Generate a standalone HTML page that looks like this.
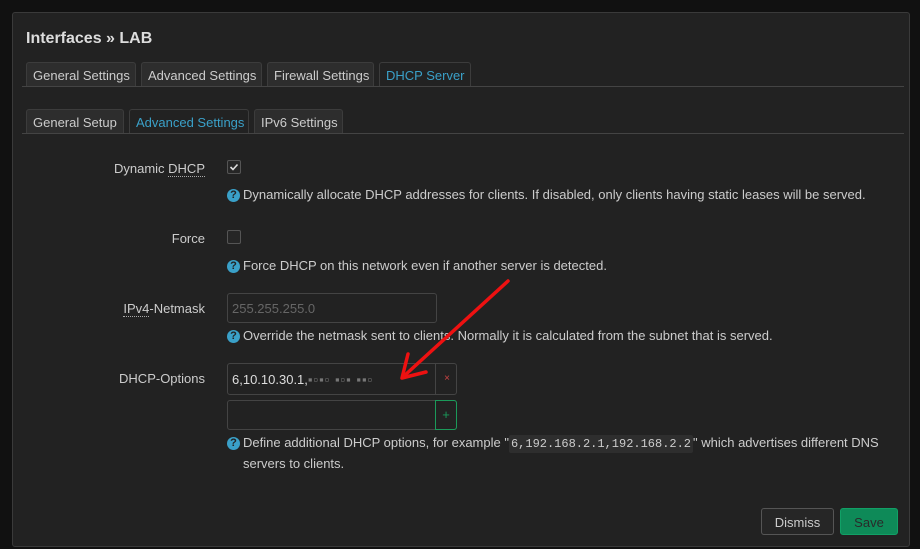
<!DOCTYPE html><html><head><style>
body{margin:0;width:920px;height:549px;background:#111;overflow:hidden;font-family:"Liberation Sans",sans-serif;font-size:13px;color:#ccc;position:relative}
.m{position:absolute;left:12px;top:12px;width:898px;height:535px;background:#222;border:1px solid #3a3a3a;border-radius:3px;box-sizing:border-box}
.a{position:absolute}
h1{position:absolute;left:13px;top:17px;margin:0;font-size:16px;font-weight:bold;color:#ddd}
.tab{position:absolute;height:24px;line-height:25px;background:#2d2d2d;border:1px solid #3c3c3c;border-bottom:none;border-radius:3px 3px 0 0;padding:0 6px;box-sizing:border-box;color:#ccc;white-space:nowrap}
.tab.on{background:#222;color:#3aa0c8;height:25px}
.line{position:absolute;left:9px;width:882px;height:1px;background:#444}
.lbl{position:absolute;right:704px;text-align:right;white-space:nowrap}
.cb{position:absolute;left:214px;width:12px;height:12px;border:1px solid #555;border-radius:2px;background:#262626}
.hint{position:absolute;left:214px;white-space:nowrap;line-height:20px}
.q{display:inline-block;width:13px;height:13px;border-radius:50%;background:#3aa0c8;color:#222;font-weight:bold;font-size:11px;text-align:center;line-height:13px;vertical-align:1px;margin-right:3px}
.inp{position:absolute;left:214px;border:1px solid #444;border-radius:3px;background:#222;box-sizing:border-box}
code{font-family:"Liberation Mono",monospace;background:#2e2e2e;padding:2px 2px;border-radius:2px;font-size:12px}
.btn{position:absolute;top:495px;height:27px;line-height:27px;text-align:center;border-radius:3px;box-sizing:border-box}
</style></head><body>
<div class="m">
<h1>Interfaces » LAB</h1>
<div class="tab" style="left:13px;top:49px;width:110px">General Settings</div>
<div class="tab" style="left:128px;top:49px;width:121px">Advanced Settings</div>
<div class="tab" style="left:254px;top:49px;width:107px">Firewall Settings</div>
<div class="tab on" style="left:366px;top:49px;width:92px">DHCP Server</div>
<div class="line" style="top:73px"></div>
<div class="tab" style="left:13px;top:96px;width:98px">General Setup</div>
<div class="tab on" style="left:116px;top:96px;width:120px">Advanced Settings</div>
<div class="tab" style="left:241px;top:96px;width:89px">IPv6 Settings</div>
<div class="line" style="top:120px"></div>

<div class="lbl" style="top:148px">Dynamic <span style="border-bottom:1px dotted #aaa">DHCP</span></div>
<div class="cb" style="top:147px"><svg width="12" height="12" style="display:block"><polyline points="2.5,6 5,8.5 9.5,3.5" fill="none" stroke="#ddd" stroke-width="1.6"/></svg></div>
<div class="hint" style="top:172px"><span class="q">?</span>Dynamically allocate DHCP addresses for clients. If disabled, only clients having static leases will be served.</div>

<div class="lbl" style="top:218px">Force</div>
<div class="cb" style="top:217px"></div>
<div class="hint" style="top:243px"><span class="q">?</span>Force DHCP on this network even if another server is detected.</div>

<div class="lbl" style="top:288px"><span style="border-bottom:1px dotted #aaa">IPv4</span>-Netmask</div>
<div class="inp" style="top:280px;width:210px;height:30px;color:#666;padding:7px 4px">255.255.255.0</div>
<div class="hint" style="top:313px"><span class="q">?</span>Override the netmask sent to clients. Normally it is calculated from the subnet that is served.</div>

<div class="lbl" style="top:358px">DHCP-Options</div>
<div class="inp" style="top:350px;width:230px;height:32px;padding:8px 4px;color:#ddd">6,10.10.30.1,<span style="color:#777;letter-spacing:1px">▪▫▪▫ ▪▫▪ ▪▪▫</span></div>
<div class="a" style="left:422px;top:350px;width:22px;height:32px;border-left:1px solid #444;color:#c44;font-size:10px;text-align:center;line-height:32px">×</div>
<div class="inp" style="top:387px;width:230px;height:30px"></div>
<div class="a" style="left:422px;top:387px;width:22px;height:30px;border:1px solid #1b9a5a;border-radius:0 3px 3px 0;box-sizing:border-box;color:#1b9a5a;text-align:center;line-height:28px">+</div>
<div class="hint" style="top:420px"><span class="q">?</span>Define additional DHCP options, for example "<code>6,192.168.2.1,192.168.2.2</code>" which advertises different DNS<br><span style="padding-left:16px">servers to clients.</span></div>

<div class="btn" style="left:748px;width:73px;border:1px solid #555;background:#262626">Dismiss</div>
<div class="btn" style="left:827px;width:58px;background:#0e8a58;border:1px solid #11a066;color:#2a2a2a">Save</div>
</div>
<svg class="a" style="left:0;top:0" width="920" height="549"><line x1="508" y1="281" x2="404" y2="376" stroke="#e11" stroke-width="3.5" stroke-linecap="round"/><polyline points="408,354 402,378 426,372" fill="none" stroke="#e11" stroke-width="3.5" stroke-linecap="round" stroke-linejoin="round"/></svg>
</body></html>
